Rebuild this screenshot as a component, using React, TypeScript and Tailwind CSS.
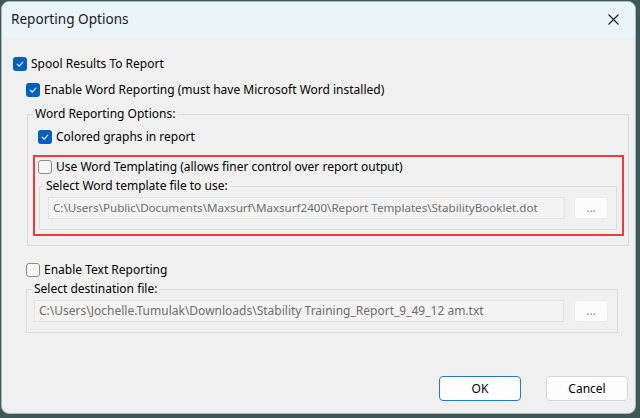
import React from "react";

const font = { fontFamily: '"Noto Sans", "Segoe UI", sans-serif' };

function CheckBox({ checked }: { checked: boolean }) {
  if (checked) {
    return (
      <span className="flex h-[14px] w-[14px] shrink-0 items-center justify-center rounded-[3px] bg-[#005fb8]">
        <svg width="10" height="10" viewBox="0 0 10 10" fill="none">
          <path d="M2.2 5.2 L4.2 7.1 L7.9 3" stroke="#ffffff" strokeWidth="1.1" strokeLinecap="round" strokeLinejoin="round" />
        </svg>
      </span>
    );
  }
  return <span className="h-[14px] w-[14px] shrink-0 rounded-[3px] border border-[#8b8b8b] bg-[#f6f6f6]" />;
}

function CheckRow({ checked, label, className }: { checked: boolean; label: string; className?: string }) {
  return (
    <div className={`flex h-[16px] items-center gap-[4px] ${className ?? ""}`}>
      <CheckBox checked={checked} />
      <span className="whitespace-nowrap text-[12px] leading-[16px] text-black">{label}</span>
    </div>
  );
}

function PathRow({ path, className, boxWidth, gap, textSize }: { path: string; className?: string; boxWidth: string; gap: string; textSize: string }) {
  return (
    <div className={`flex items-center ${gap} ${className ?? ""}`}>
      <div className={`flex h-[22px] ${boxWidth} items-center overflow-hidden whitespace-nowrap border border-[#e3e3e3] bg-[#f3f3f3] px-[4px] ${textSize} text-[#6d6d6d]`}>
        {path}
      </div>
      <button
        type="button"
        className="flex h-[22px] w-[34px] items-center justify-center rounded-[3px] border border-[#ececec] bg-[#fbfbfb] text-[12px] text-[#8a8a8a]"
      >
        ...
      </button>
    </div>
  );
}

export default function App() {
  return (
    <div className="h-[418px] w-[640px] bg-[#3d5856] pl-[1px] pt-[1px] pr-[4px] pb-[4px]" style={font}>
      <div className="flex h-full w-full flex-col overflow-hidden rounded-[8px] border border-[#a9b8b8] bg-[#f0f0f0]">
        {/* title bar */}
        <div className="flex h-[35px] shrink-0 items-center justify-between bg-[#e9f5f9] pl-[9px] pr-[16px]">
          <span className="text-[13.6px] text-[#1a1a1a]">Reporting Options</span>
          <svg width="11" height="11" viewBox="0 0 11 11">
            <path d="M0.5 0.5 L10.5 10.5 M10.5 0.5 L0.5 10.5" stroke="#1f1f1f" strokeWidth="1.1" />
          </svg>
        </div>

        {/* body */}
        <div className="flex flex-1 flex-col pl-[11px]">
          <CheckRow checked label="Spool Results To Report" className="mt-[19px]" />
          <CheckRow checked label="Enable Word Reporting (must have Microsoft Word installed)" className="mt-[10px] ml-[13px]" />

          <fieldset className="ml-[14px] mt-[8px] w-[602px] border border-[#dadada] pb-[9px]">
            <legend className="ml-[5px] px-[2px] text-[12px] leading-[16px] text-black">Word Reporting Options:</legend>
            <CheckRow checked label="Colored graphs in report" className="mt-[7px] ml-[10px]" />

            <div className="ml-[5px] mt-[10px] w-[591px] border-2 border-[#ee3a3f] pb-[4px]">
              <CheckRow checked={false} label="Use Word Templating (allows finer control over report output)" className="mt-[2px] ml-[3px]" />
              <fieldset className="ml-[4px] mt-[3px] w-[578px] border border-[#dadada] pb-[10px]">
                <legend className="ml-[4px] px-[2px] text-[12px] leading-[16px] text-black">Select Word template file to use:</legend>
                <PathRow
                  className="mt-[3px] ml-[8px]"
                  boxWidth="w-[517px]"
                  gap="gap-[9px]"
                  textSize="text-[11.6px]"
                  path="C:\Users\Public\Documents\Maxsurf\Maxsurf2400\Report Templates\StabilityBooklet.dot"
                />
              </fieldset>
            </div>
          </fieldset>

          <CheckRow checked={false} label="Enable Text Reporting" className="mt-[16px] ml-[13px]" />
          <fieldset className="ml-[13px] mt-[3px] w-[592px] border border-[#dadada] pb-[10px]">
            <legend className="ml-[5px] px-[2px] text-[12px] leading-[16px] text-black">Select destination file:</legend>
            <PathRow
              className="mt-[3px] ml-[7px]"
              boxWidth="w-[530px]"
              gap="gap-[10px]"
              textSize="text-[12px]"
              path="C:\Users\Jochelle.Tumulak\Downloads\Stability Training_Report_9_49_12 am.txt"
            />
          </fieldset>

          <div className="mt-[43px] flex justify-end gap-[25px] pr-[7px]">
            <button
              type="button"
              className="h-[25px] w-[82px] rounded-[4px] border-[1.5px] border-[#2a76c6] bg-[#fdfdfd] text-[12px] text-black"
            >
              OK
            </button>
            <button
              type="button"
              className="h-[25px] w-[82px] rounded-[4px] border border-[#d5d5d5] bg-[#fdfdfd] text-[12px] text-black"
            >
              Cancel
            </button>
          </div>
        </div>
      </div>
    </div>
  );
}
